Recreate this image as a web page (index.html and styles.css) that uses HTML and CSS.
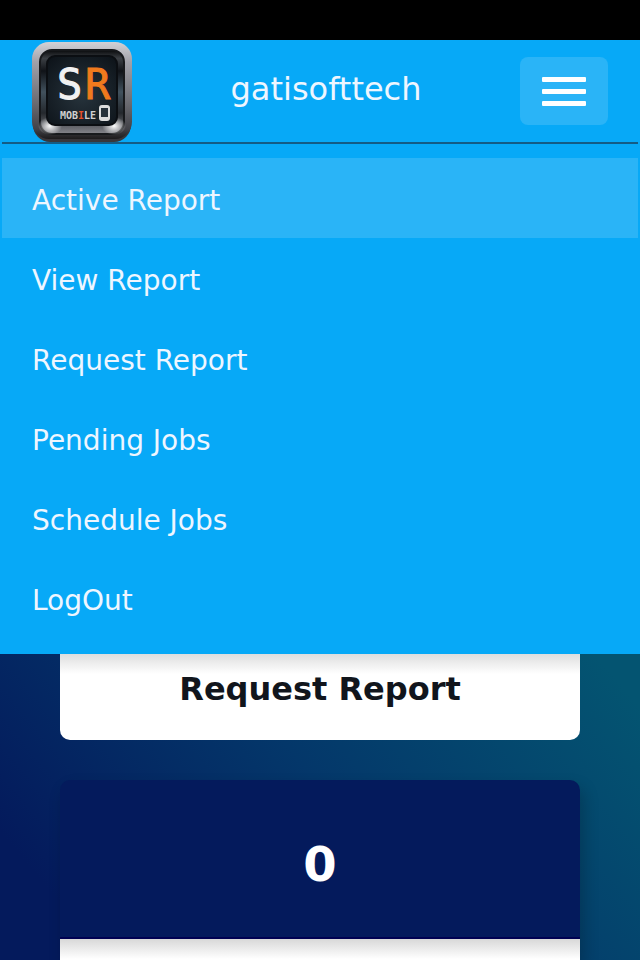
FILE: index.html
```html
<!DOCTYPE html>
<html lang="en">
<head>
    <meta charset="UTF-8">
    <meta name="viewport" content="width=device-width, initial-scale=1.0">
    <title>SR Mobile</title>
    <link rel="stylesheet" href="styles.css">
</head>
<body>

    <div class="status-bar"></div>

    <!-- Header -->
    <header class="header">
        <div class="navbar">
            <a href="#" class="logo" aria-label="SR Mobile">
                <svg viewBox="0 0 100 102" width="100" height="102">
                    <defs>
                        <linearGradient id="frame" x1="0" y1="0" x2="0" y2="1">
                            <stop offset="0" stop-color="#d2d2d6"/>
                            <stop offset="0.2" stop-color="#a2a2aa"/>
                            <stop offset="0.65" stop-color="#68686e"/>
                            <stop offset="0.9" stop-color="#414147"/>
                            <stop offset="1" stop-color="#1d1b1c"/>
                        </linearGradient>
                        <linearGradient id="bevel" x1="0" y1="0" x2="0" y2="1">
                            <stop offset="0" stop-color="#08090b"/>
                            <stop offset="0.1" stop-color="#3c4045"/>
                            <stop offset="0.25" stop-color="#101318"/>
                            <stop offset="0.5" stop-color="#41515d"/>
                            <stop offset="0.75" stop-color="#24282d"/>
                            <stop offset="1" stop-color="#85858b"/>
                        </linearGradient>
                        <radialGradient id="shine">
                            <stop offset="0" stop-color="#fff"/>
                            <stop offset="1" stop-color="#fff" stop-opacity="0"/>
                        </radialGradient>
                        <radialGradient id="screen" cx="0.5" cy="0.55" r="0.7">
                            <stop offset="0" stop-color="#27343d"/>
                            <stop offset="1" stop-color="#0d1319"/>
                        </radialGradient>
                    </defs>
                    <rect x="1" y="3" width="98" height="99" rx="17" fill="#39363a"/>
                    <rect x="0" y="2" width="100" height="97" rx="17" fill="url(#frame)"/>
                    <rect x="8" y="10" width="84" height="84" rx="12" fill="url(#bevel)" stroke="#17191c" stroke-width="2"/>
                    <ellipse cx="18" cy="86" rx="12" ry="9" fill="url(#shine)"/>
                    <ellipse cx="82" cy="86" rx="12" ry="9" fill="url(#shine)"/>
                    <rect x="15" y="16" width="70" height="69" rx="8" fill="url(#screen)" stroke="#0b0e12" stroke-width="2"/>
                    <text class="logo-letters" x="25" y="59">S</text>
                    <text class="logo-letters logo-orange" x="53" y="59">R</text>
                    <text class="logo-text" x="28" y="79">MOB<tspan class="logo-accent">I</tspan>LE</text>
                    <rect x="67" y="65" width="11" height="16" rx="3" fill="#dcdcdc"/>
                    <rect x="69" y="68" width="7" height="9" fill="#26313a"/>
                </svg>
            </a>
            <h1 class="title">gatisofttech</h1>
            <button type="button" class="menu-button" aria-label="Toggle menu">
                <span class="bar"></span>
                <span class="bar"></span>
                <span class="bar"></span>
            </button>
        </div>

        <!-- Menu -->
        <nav class="menu">
            <a href="#" class="active">Active Report</a>
            <a href="#">View Report</a>
            <a href="#">Request Report</a>
            <a href="#">Pending Jobs</a>
            <a href="#">Schedule Jobs</a>
            <a href="#">LogOut</a>
        </nav>
    </header>

    <!-- Cards -->
    <main class="content">
        <section class="card card-open">
            <h2 class="card-title">Request Report</h2>
        </section>
        <section class="card">
            <div class="card-count">0</div>
            <div class="card-body"></div>
        </section>
    </main>

</body>
</html>
```
FILE: styles.css
```css
/* Global Styles */
* {
    box-sizing: border-box;
}

body {
    font-family: Verdana, 'DejaVu Sans', sans-serif;
    margin: 0;
    height: 100vh;
    display: flex;
    flex-direction: column;
    overflow: hidden;
    background-color: #041a5c;
}

.status-bar {
    height: 40px;
    flex-shrink: 0;
    background-color: #000;
}

/* Header */
.header {
    background-color: #07a9f7;
    padding: 0 2px 16px;
    flex-shrink: 0;
}

.navbar {
    display: grid;
    grid-template-columns: 100px 1fr 88px;
    align-items: center;
    height: 104px;
    padding: 0 30px;
    border-bottom: 2px solid #145c85;
}

.logo svg {
    display: block;
}

.logo-letters {
    font-family: 'DejaVu Sans Mono', monospace;
    font-size: 42px;
    fill: #f1f1f1;
    stroke: #f1f1f1;
    stroke-width: 1px;
}

.logo-orange {
    fill: #f07a1d;
    stroke: #f07a1d;
}

.logo-text {
    font-family: 'DejaVu Sans Mono', monospace;
    font-size: 10px;
    font-weight: bold;
    fill: #d0d0d0;
}

.logo-accent {
    fill: #e8502a;
}

.title {
    margin: 0;
    padding-bottom: 4px;
    font-size: 32px;
    font-weight: normal;
    text-align: center;
    color: #eef6ff;
}

.menu-button {
    display: flex;
    flex-direction: column;
    align-items: center;
    justify-content: center;
    gap: 7px;
    height: 68px;
    padding: 0;
    border: none;
    border-radius: 8px;
    background-color: #2ab4f7;
    cursor: pointer;
}

.bar {
    width: 44px;
    height: 5px;
    border-radius: 1px;
    background-color: #fff;
}

/* Menu */
.menu {
    padding-top: 14px;
}

.menu a {
    display: block;
    padding: 0 30px;
    font-size: 28px;
    line-height: 86px;
    height: 80px;
    color: #eef6ff;
    text-decoration: none;
}

.menu a.active,
.menu a:hover {
    background-color: #2ab4f7;
}

/* Cards */
.content {
    flex: 1;
    display: flex;
    flex-direction: column;
    gap: 40px;
    padding: 0 60px;
    background: linear-gradient(50deg, #041a5c 12%, #04376a 52%, #045471 95%);
}

.card {
    display: flex;
    flex-direction: column;
    flex: 1;
    border-radius: 10px 10px 0 0;
    box-shadow: 4px 8px 16px rgba(0, 0, 0, 0.2);
}

.card-open {
    flex: none;
    height: 86px;
    background: linear-gradient(#dedede, #fff 20px);
    border-radius: 0 0 10px 10px;
    box-shadow: none;
}

.card-title {
    margin: 0;
    font-size: 32px;
    line-height: 70px;
    text-align: center;
    color: #11151c;
}

.card-count {
    height: 159px;
    border-radius: 10px 10px 0 0;
    background-color: #041a5c;
    border-bottom: 2px solid #000052;
    color: #fff;
    font-size: 48px;
    font-weight: bold;
    line-height: 168px;
    text-align: center;
}

.card-body {
    flex: 1;
    background: linear-gradient(#d8d8d8, #fff 20px);
}
```
